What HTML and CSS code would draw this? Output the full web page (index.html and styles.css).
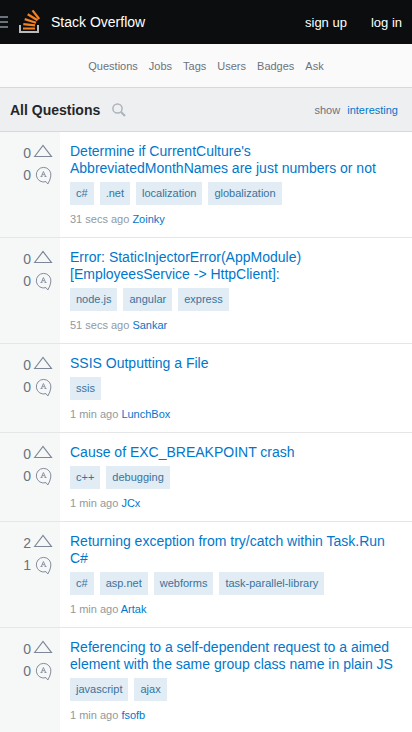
FILE: index.html
```html
<!DOCTYPE html>
<html lang="en">
<head>
<meta charset="utf-8">
<meta name="viewport" content="width=device-width, initial-scale=1">
<title>All Questions - Stack Overflow</title>
<link rel="stylesheet" href="styles.css">
</head>
<body>
<svg class="sprites" aria-hidden="true">
  <symbol id="vote" viewBox="0 0 20 14"><path d="M1.600 12.500 10 1.500l8.400 11z" fill="none" stroke="#7d8798" stroke-width="1.200"/></symbol>
  <symbol id="answer" viewBox="0 0 18 19"><path d="M11 15.600A7.300 7.300 0 1 1 15.800 10Q15.300 14 12.800 18L11 15.600" fill="none" stroke="#858b9c" stroke-width="1"/><path d="M5.500 10.500h2M9.500 10.500h2M6.400 10.400 8.400 5.500l2.200 4.900M7.100 8.700h2.600" fill="none" stroke="#858b9c" stroke-width=".9"/></symbol>
</svg>
<header class="topbar">
  <button class="menu" type="button" aria-label="Menu"><svg width="8" height="12" viewBox="0 0 8 12"><path d="M0 1h8M0 6h8M0 11h8" stroke="#6a737c" stroke-width="2"/></svg></button>
  <a class="brand" href="#">
    <svg class="logo" width="22" height="25" viewBox="0 0 22 25" aria-hidden="true"><path d="M1 16v7h18v-7" fill="none" stroke="#bcbbbb" stroke-width="2"/><path d="M4 19.500h12M4.300 15.100l11.800 1.200M5.700 10.100l11.300 3.600M8.700 5.200l9.800 6.100M13.500 1.300l6.700 8.700" fill="none" stroke="#f48024" stroke-width="2.200"/></svg>
    <span>Stack Overflow</span>
  </a>
  <nav class="account" aria-label="Account"><a href="#">sign up</a><a href="#">log in</a></nav>
</header>
<nav class="sections" aria-label="Sections"><a href="#">Questions</a><a href="#">Jobs</a><a href="#">Tags</a><a href="#">Users</a><a href="#">Badges</a><a href="#">Ask</a></nav>
<div class="heading">
  <h1>All Questions</h1>
  <button class="search" type="button" aria-label="Search"><svg width="14" height="14" viewBox="0 0 14 14"><circle cx="5.500" cy="5.500" r="4.600" fill="none" stroke="#adb4bc" stroke-width="1.500"/><path d="m9 9 4 4" stroke="#adb4bc" stroke-width="2.200"/></svg></button>
  <div class="filter">show <a href="#">interesting</a></div>
</div>
<main>
  <article class="question">
    <div class="stats"><span class="stat">0<svg class="vote" role="img" aria-label="votes"><use href="#vote"/></svg></span><span class="stat">0<svg class="answer" role="img" aria-label="answers"><use href="#answer"/></svg></span></div>
    <div class="summary">
      <h2><a href="#">Determine if CurrentCulture's AbbreviatedMonthNames are just numbers or not</a></h2>
      <div class="tags"><a href="#">c#</a><a href="#">.net</a><a href="#">localization</a><a href="#">globalization</a></div>
      <p class="meta">31 secs ago <a href="#">Zoinky</a></p>
    </div>
  </article>
  <article class="question">
    <div class="stats"><span class="stat">0<svg class="vote" role="img" aria-label="votes"><use href="#vote"/></svg></span><span class="stat">0<svg class="answer" role="img" aria-label="answers"><use href="#answer"/></svg></span></div>
    <div class="summary">
      <h2><a href="#">Error: StaticInjectorError(AppModule)[EmployeesService -&gt; HttpClient]:</a></h2>
      <div class="tags"><a href="#">node.js</a><a href="#">angular</a><a href="#">express</a></div>
      <p class="meta">51 secs ago <a href="#">Sankar</a></p>
    </div>
  </article>
  <article class="question">
    <div class="stats"><span class="stat">0<svg class="vote" role="img" aria-label="votes"><use href="#vote"/></svg></span><span class="stat">0<svg class="answer" role="img" aria-label="answers"><use href="#answer"/></svg></span></div>
    <div class="summary">
      <h2><a href="#">SSIS Outputting a File</a></h2>
      <div class="tags"><a href="#">ssis</a></div>
      <p class="meta">1 min ago <a href="#">LunchBox</a></p>
    </div>
  </article>
  <article class="question">
    <div class="stats"><span class="stat">0<svg class="vote" role="img" aria-label="votes"><use href="#vote"/></svg></span><span class="stat">0<svg class="answer" role="img" aria-label="answers"><use href="#answer"/></svg></span></div>
    <div class="summary">
      <h2><a href="#">Cause of EXC_BREAKPOINT crash</a></h2>
      <div class="tags"><a href="#">c++</a><a href="#">debugging</a></div>
      <p class="meta">1 min ago <a href="#">JCx</a></p>
    </div>
  </article>
  <article class="question">
    <div class="stats"><span class="stat">2<svg class="vote" role="img" aria-label="votes"><use href="#vote"/></svg></span><span class="stat">1<svg class="answer" role="img" aria-label="answers"><use href="#answer"/></svg></span></div>
    <div class="summary">
      <h2><a href="#">Returning exception from try/catch within Task.Run C#</a></h2>
      <div class="tags"><a href="#">c#</a><a href="#">asp.net</a><a href="#">webforms</a><a href="#">task-parallel-library</a></div>
      <p class="meta">1 min ago <a href="#">Artak</a></p>
    </div>
  </article>
  <article class="question">
    <div class="stats"><span class="stat">0<svg class="vote" role="img" aria-label="votes"><use href="#vote"/></svg></span><span class="stat">0<svg class="answer" role="img" aria-label="answers"><use href="#answer"/></svg></span></div>
    <div class="summary">
      <h2><a href="#">Referencing to a self-dependent request to a aimed element with the same group class name in plain JS</a></h2>
      <div class="tags"><a href="#">javascript</a><a href="#">ajax</a></div>
      <p class="meta">1 min ago <a href="#">fsofb</a></p>
    </div>
  </article>
</main>
</body>
</html>
```
FILE: styles.css
```css
* { box-sizing: border-box; }
body {
  margin: 0;
  background: #fff;
  color: #242729;
  font-family: Helvetica, "Liberation Sans", Arial, sans-serif;
  font-size: 11px;
}
a { color: #0077cc; text-decoration: none; }
h1, h2, p { margin: 0; }
button { display: flex; padding: 0; border: 0; background: none; }
.sprites { display: none; }

.topbar {
  display: flex;
  align-items: center;
  height: 44px;
  padding-right: 10px;
  background: #0c0d0e;
}
.brand {
  display: flex;
  align-items: center;
  gap: 10px;
  margin-left: 11px;
  color: #fff;
  font-size: 14px;
}
.logo { margin-bottom: 2px; }
.account { display: flex; gap: 24px; margin-left: auto; font-size: 13px; }
.account a { color: #fff; }

.sections {
  display: flex;
  justify-content: center;
  align-items: center;
  gap: 11px;
  height: 44px;
  border-bottom: 1px solid #d6d9dc;
  background: #fafafb;
}
.sections a { color: #6a737c; }

.heading {
  display: flex;
  align-items: center;
  height: 44px;
  padding: 0 14px 0 10px;
  border-bottom: 1px solid #d6d9dc;
  background: #eeeff1;
}
.heading h1 { font-size: 14px; line-height: 18px; }
.search { margin-left: 12px; }
.filter { margin-left: auto; color: #6a737c; }
.filter a { margin-left: 4px; }

.question { display: flex; border-bottom: 1px solid #e4e6e8; }
.question:last-child { border-bottom: 0; }
.stats {
  flex: 0 0 60px;
  padding: 10px 7px 0 0;
  background: #f6f8f8;
  color: #6a737c;
  font-size: 14px;
}
.stat {
  display: flex;
  justify-content: flex-end;
  align-items: center;
  gap: 2px;
  height: 22px;
}
.vote { width: 20px; height: 14px; margin-bottom: 5px; }
.answer { width: 18px; height: 19px; margin-left: 2px; }
.summary { flex: 1; min-width: 0; padding: 11px 10px; }
.summary h2 {
  font-size: 14px;
  font-weight: 400;
  line-height: 17px;
  overflow-wrap: anywhere;
}
.tags { display: flex; flex-wrap: wrap; gap: 6px; margin-top: 5px; }
.tags a {
  padding: 0 6px;
  background: #e1ecf4;
  color: #39739d;
  line-height: 23px;
}
.meta { margin-top: 7px; color: #9199a1; line-height: 14px; }
```
